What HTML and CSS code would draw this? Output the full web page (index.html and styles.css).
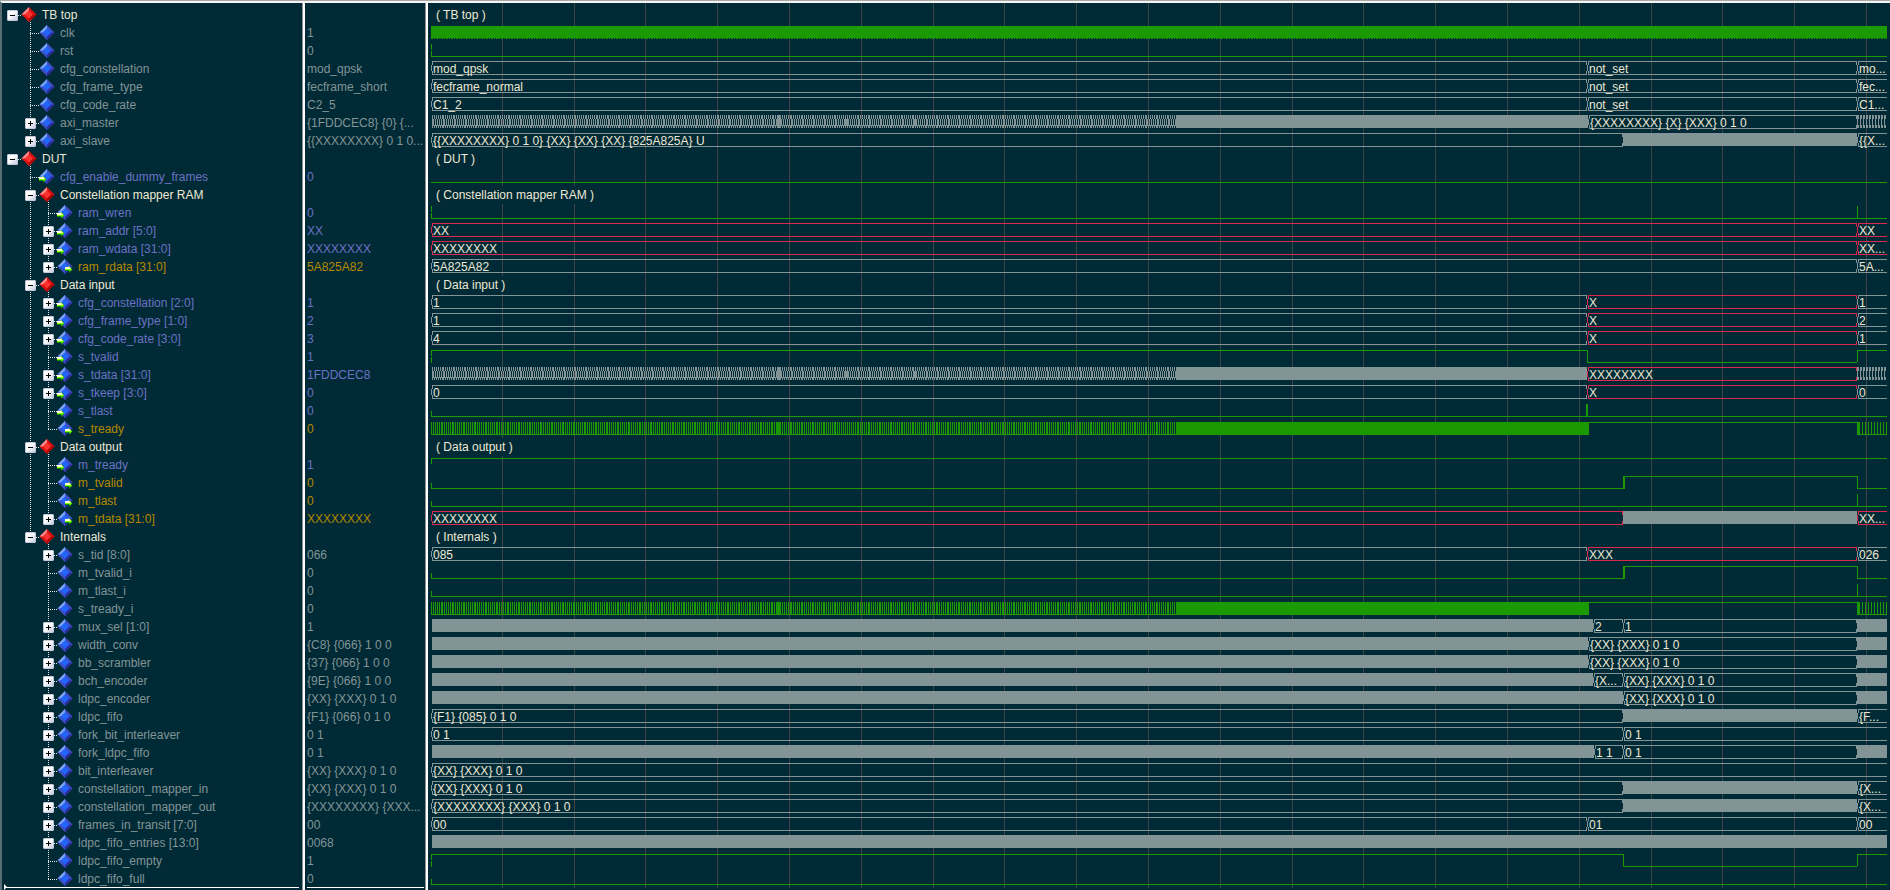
FILE: index.html
```html
<!DOCTYPE html>
<html lang="en">
<head>
<meta charset="utf-8">
<title>Waveform viewer</title>
<link rel="stylesheet" href="styles.css">
</head>
<body>
<svg class="defs" aria-hidden="true">
  <symbol id="red" viewBox="0 0 18 18">
    <path d="M8 1 L15.500 8.500 L8 16 L0.500 8.500Z" fill="#d91010"/>
    <path d="M8 1 V4.500 L4 8.500 H0.500Z" fill="#ff8c8c"/>
    <path d="M8 16 L15.500 8.500 H12 L8 12.500Z" fill="#a80404"/>
    <path d="M8 4.500 L12 8.500 L8 12.500 L4 8.500Z" fill="#ff3030"/>
  </symbol>
  <symbol id="blue" viewBox="0 0 18 18">
    <path d="M8 1 L15.500 8.500 L8 16 L0.500 8.500Z" fill="#3d50c8"/>
    <path d="M8 1 V4.500 L4 8.500 H0.500Z" fill="#7aa4f4"/>
    <path d="M8 16 L15.500 8.500 H12 L8 12.500Z" fill="#2c2ca0"/>
    <path d="M8 4.500 L12 8.500 L8 12.500 L4 8.500Z" fill="#2166fa"/>
  </symbol>
  <symbol id="arrow" viewBox="0 0 8 8">
    <path d="M0 3 H4 V1 L7.500 4.500 L4 8 V6 H0Z" fill="#0c8a00"/>
    <path d="M0 3 H4 V1 L7 4.500 L4.500 6.500 V5 H0Z" fill="#7dff00"/>
    <path d="M0 2 H3.500 V1 L6 4 H0Z" fill="#ffffd8"/>
  </symbol>
</svg>
<main class="viewer">
  <section class="pane names" aria-label="Signals">
    <ul class="rows" id="names"></ul>
    <div class="scroll"><span class="thumb"></span></div>
  </section>
  <section class="pane values" aria-label="Values">
    <ul class="rows" id="values"></ul>
    <div class="scroll"><span class="thumb"></span></div>
  </section>
  <section class="pane waves" aria-label="Waves">
    <div class="plot">
      <div class="grid" id="grid"></div>
      <ul class="rows" id="waves"></ul>
    </div>
  </section>
</main>
<script src="waves.js"></script>
</body>
</html>
```
FILE: styles.css
```css
* { box-sizing: border-box; }

body {
  margin: 0;
  background: #002b36;
  color: #839496;
  font: 12px/18px "Liberation Sans", Arial, sans-serif;
  overflow: hidden;
}

.defs { display: none; }

.viewer {
  display: grid;
  grid-template-columns: 305px 123px minmax(0, 1fr);
  min-height: 100vh;
  border-top: 1px solid #a8a8a8;
}

.pane {
  border-top: 2px solid #f4f4f4;
  padding-top: 3px;
  min-width: 0;
}

.names {
  border-left: 2px solid #586e75;
  box-shadow: inset -2px 0 #ffffff, inset -3px 0 #909090;
}

.values { box-shadow: inset -2px 0 #ffffff, inset -3px 0 #909090; }

.rows { list-style: none; margin: 0; padding: 0; }

.row {
  display: flex;
  height: 18px;
  white-space: pre;
}

.names .row { padding-left: 1px; }
.values .row { padding-left: 2px; }

.group { color: #eee8d5; }
.plain { color: #839496; }
.in { color: #6c71c4; }
.out { color: #b58900; }

.cell {
  display: grid;
  place-items: center;
  flex: none;
  width: 18px;
  height: 18px;
  background-repeat: no-repeat;
}

/* dotted tree guides: vertical run, horizontal run */
.cell { --v: repeating-linear-gradient(180deg, #e4e4e4 0 1px, transparent 1px 2px);
        --h: repeating-linear-gradient(90deg, #e4e4e4 0 1px, transparent 1px 2px); }
.through { background-image: var(--v); background-position: 9px 0; background-size: 1px 18px; }
.tee { background-image: var(--v), var(--h); background-position: 9px 0, 9px 9px; background-size: 1px 18px, 9px 1px; }
.corner { background-image: var(--v), var(--h); background-position: 9px 0, 9px 9px; background-size: 1px 10px, 9px 1px; }
.root { background-image: var(--h); background-position: 9px 9px; background-size: 9px 1px; }
.stem { background-image: var(--v); background-position: 9px 14px; background-size: 1px 4px; }

.toggle {
  width: 11px;
  height: 11px;
  margin: 1px 0 0 1px;
  padding: 0;
  border: 1px solid #c4cad8;
  border-radius: 1px;
  background:
    linear-gradient(#000000, #000000) center / 5px 1px no-repeat,
    linear-gradient(135deg, #ffffff 40%, #c3cbe0);
}

.toggle[aria-expanded="false"] {
  background:
    linear-gradient(#000000, #000000) center / 5px 1px no-repeat,
    linear-gradient(#000000, #000000) center / 1px 5px no-repeat,
    linear-gradient(135deg, #ffffff 40%, #c3cbe0);
}

.icon { display: block; width: 18px; height: 18px; }

.name { padding-left: 3px; }

.scroll {
  position: relative;
  height: 2px;
  margin-top: -1px;
  padding: 0 6px 0 3px;
}
.values .scroll { padding: 0 4px 0 2px; }
.thumb { display: block; height: 1px; background: #ffffff; }

/* insertion marker at the end of the signal list */
.names .scroll::before {
  content: "";
  position: absolute;
  left: 2px;
  bottom: -1px;
  width: 3px;
  height: 6px;
  background: #ffffff;
  clip-path: polygon(0 0, 100% 50%, 0 100%);
}

.plot {
  position: relative;
  margin: -3px 3px 0;
  padding-top: 3px;
  min-height: 100%;
}

.grid {
  position: absolute;
  inset: 0;
  display: flex;
  overflow: hidden;
}

.tick { flex: none; border-right: 1px solid #404444; }

.waves .rows { position: relative; }

.caption {
  padding: 0 4px 0 5px;
  background: #002b36;
  color: #eee8d5;
}

.seg {
  flex: none;
  height: 18px;
  background-repeat: no-repeat;
  --ink: linear-gradient(currentColor, currentColor);
}

.green { color: #1a9900; }
.gray { color: #839496; }
.unknown { color: #dc284e; }

.label { color: #eee8d5; padding-left: 2px; }

.bus {
  background-image: var(--ink), var(--ink), var(--ink), var(--ink), var(--ink), var(--ink), var(--ink);
  background-position: 0 5px, 1px 1px, 1px 14px, 1px 1px, 1px 11px, 100% 1px, 100% 11px;
  background-size: 1px 6px, 100% 1px, 100% 1px, 1px 4px, 1px 4px, 1px 4px, 1px 4px;
}

.bus.open {
  background-size: 1px 6px, 100% 1px, 100% 1px, 1px 4px, 1px 4px, 0 0, 0 0;
}

.dense { background-image: var(--ink); background-position: 0 1px; background-size: 100% 13px; }

.solid { background-image: var(--ink); background-position: 0 2px; background-size: 100% 13px; }

.clock {
  --dash: repeating-linear-gradient(90deg, currentColor 0 2px, transparent 2px 3px, currentColor 3px 4px, transparent 4px 5px);
  background-image: var(--ink), var(--dash);
  background-position: 0 2px, 0 14px;
  background-size: 100% 12px, 100% 1px;
}

.hatch {
  --s: repeating-linear-gradient(90deg, currentColor 0 1px, transparent 1px 2px, currentColor 2px 3px, transparent 3px 4px, currentColor 4px 5px, transparent 5px 6px, currentColor 6px 7px, transparent 7px 8px, currentColor 8px 9px, transparent 9px 10px, currentColor 10px 11px);
  --m: repeating-linear-gradient(90deg, currentColor 0 2px, transparent 2px 3px, currentColor 3px 4px, transparent 4px 5px, currentColor 5px 6px, transparent 6px 7px, currentColor 7px 8px, transparent 8px 9px, currentColor 9px 10px, transparent 10px 11px);
}

.sparse {
  --s: repeating-linear-gradient(90deg, currentColor 0 2px, transparent 2px 3px);
  --m: repeating-linear-gradient(90deg, currentColor 0 1px, transparent 1px 3px);
}

.sparse.gray {
  background-image: var(--s), var(--m), var(--s);
  background-position: 0 1px, 0 5px, 0 11px;
  background-size: 100% 4px, 100% 6px, 100% 3px;
}

.hatch.gray {
  background-image: var(--s), var(--m), var(--ink), var(--s);
  background-position: 0 1px, 0 5px, 0 11px, 0 12px;
  background-size: 100% 4px, 100% 6px, 100% 1px, 100% 2px;
}

.hatch.green, .sparse.green {
  background-image: var(--s), var(--ink);
  background-position: 0 2px, 0 14px;
  background-size: 100% 12px, 100% 1px;
}

.sparse.green { background-image: var(--m), var(--ink); }

.low { --y: 14px; }
.high { --y: 2px; }

.low, .high {
  background-image: var(--ink), var(--ink), var(--ink);
  background-position: 0 var(--y), 0 2px, 0 9px;
  background-size: 100% 1px, 0 0, 0 0;
}

.edge1 { background-size: 100% 1px, 1px 12px, 1px 5px; }
.edge2 { background-size: 100% 1px, 2px 12px, 2px 6px; }
.split { background-size: 100% 1px, 1px 6px, 1px 6px; }
.low.half { background-size: 100% 1px, 0 0, 1px 6px; }
.high.half { background-size: 100% 1px, 1px 6px, 0 0; }
```
FILE: waves.js
```js
// Time axis: the plot shows SPAN units; the main events fall at these times.
const SPAN = 1456;
const GRID_STEP = 71.8;
const END = SPAN;
const IDLE = 1156;
const OUT = 1192;
const NEXT = 1426;

// A segment is [css classes, end time, label].
const bus = (end, label) => ['bus gray', end, label];
const bad = (end, label) => ['bus unknown', end, label];
const gap = ['', 1];
const dense = end => ['dense gray', end];
const lo = (end, extra = '') => ['low green ' + extra, end];
const hi = (end, extra = '') => ['high green ' + extra, end];

const three = (a, b, c) => [bus(IDLE, a), bus(NEXT, b), bus(END, c)];
const config = (a, c) => [bus(IDLE, a), bad(NEXT, 'X'), bus(END, c)];
const burst = color => [
  ['hatch ' + color, 346], [(color === 'gray' ? 'dense ' : 'solid ') + color, 349],
  ['hatch ' + color, 414], [(color === 'gray' ? '' : 'solid ') + 'hatch ' + color, 416],
  ['hatch ' + color, 482], [(color === 'gray' ? '' : 'solid ') + 'hatch ' + color, 484],
  ['hatch ' + color, 745]
];
const ready = [...burst('green'), ['solid green', 1158], hi(NEXT), ['solid green', NEXT + 2], ['sparse green', END]];
const valid = [lo(OUT, 'half'), hi(NEXT, 'edge2'), lo(END, 'edge1')];
const last = [lo(NEXT, 'half'), lo(END, 'edge1')];

// Row: [depth, kind, name, value, segments]; a name starting with "+" is collapsed.
const rows = [
  [0, 'group', 'TB top'],
  [1, 'plain', 'clk', '1', [['clock green', END]]],
  [1, 'plain', 'rst', '0', [lo(END, 'split')]],
  [1, 'plain', 'cfg_constellation', 'mod_qpsk', three('mod_qpsk', 'not_set', 'mo...')],
  [1, 'plain', 'cfg_frame_type', 'fecframe_short', three('fecframe_normal', 'not_set', 'fec...')],
  [1, 'plain', 'cfg_code_rate', 'C2_5', three('C1_2', 'not_set', 'C1...')],
  [1, 'plain', '+axi_master', '{1FDDCEC8} {0} {...', [gap, ...burst('gray'), dense(1157), bus(NEXT, '{XXXXXXXX} {X} {XXX} 0 1 0'), ['sparse gray', END]]],
  [1, 'plain', '+axi_slave', '{{XXXXXXXX} 0 1 0...', [bus(OUT, '{{XXXXXXXX} 0 1 0} {XX} {XX} {XX} {825A825A} U'), dense(NEXT), bus(END, '{{X...')]],
  [0, 'group', 'DUT'],
  [1, 'in', 'cfg_enable_dummy_frames', '0', [lo(END)]],
  [1, 'group', 'Constellation mapper RAM'],
  [2, 'in', 'ram_wren', '0', [lo(NEXT, 'split'), lo(END, 'edge1')]],
  [2, 'in', '+ram_addr [5:0]', 'XX', [bad(NEXT, 'XX'), bad(END, 'XX')]],
  [2, 'in', '+ram_wdata [31:0]', 'XXXXXXXX', [bad(NEXT, 'XXXXXXXX'), bad(END, 'XX...')]],
  [2, 'out', '+ram_rdata [31:0]', '5A825A82', [bus(NEXT, '5A825A82'), bus(END, '5A...')]],
  [1, 'group', 'Data input'],
  [2, 'in', '+cfg_constellation [2:0]', '1', config('1', '1')],
  [2, 'in', '+cfg_frame_type [1:0]', '2', config('1', '2')],
  [2, 'in', '+cfg_code_rate [3:0]', '3', config('4', '1')],
  [2, 'in', 's_tvalid', '1', [hi(IDLE, 'split'), lo(NEXT, 'edge1'), hi(END, 'edge1')]],
  [2, 'in', '+s_tdata [31:0]', '1FDDCEC8', [gap, ...burst('gray'), dense(IDLE), bad(NEXT, 'XXXXXXXX'), ['sparse gray', END]]],
  [2, 'in', '+s_tkeep [3:0]', '0', config('0', '0')],
  [2, 'in', 's_tlast', '0', [lo(IDLE - 1, 'half'), lo(END, 'edge2')]],
  [2, 'out', 's_tready', '0', ready],
  [1, 'group', 'Data output'],
  [2, 'in', 'm_tready', '1', [hi(END, 'half')]],
  [2, 'out', 'm_tvalid', '0', valid],
  [2, 'out', 'm_tlast', '0', last],
  [2, 'out', '+m_tdata [31:0]', 'XXXXXXXX', [bad(OUT, 'XXXXXXXX'), dense(NEXT), bad(END, 'XX...')]],
  [1, 'group', 'Internals'],
  [2, 'plain', '+s_tid [8:0]', '066', [bus(IDLE, '085'), bad(NEXT, 'XXX'), bus(END, '026')]],
  [2, 'plain', 'm_tvalid_i', '0', valid],
  [2, 'plain', 'm_tlast_i', '0', last],
  [2, 'plain', 's_tready_i', '0', ready],
  [2, 'plain', '+mux_sel [1:0]', '1', [gap, dense(1162), bus(OUT, '2'), bus(NEXT, '1'), dense(END)]],
  [2, 'plain', '+width_conv', '{C8} {066} 1 0 0', [gap, dense(1157), bus(NEXT, '{XX} {XXX} 0 1 0'), dense(END)]],
  [2, 'plain', '+bb_scrambler', '{37} {066} 1 0 0', [gap, dense(1157), bus(NEXT, '{XX} {XXX} 0 1 0'), dense(END)]],
  [2, 'plain', '+bch_encoder', '{9E} {066} 1 0 0', [gap, dense(1162), bus(OUT, '{X...'), bus(NEXT, '{XX} {XXX} 0 1 0'), dense(END)]],
  [2, 'plain', '+ldpc_encoder', '{XX} {XXX} 0 1 0', [gap, dense(OUT), bus(NEXT, '{XX} {XXX} 0 1 0'), dense(END)]],
  [2, 'plain', '+ldpc_fifo', '{F1} {066} 0 1 0', [bus(OUT, '{F1} {085} 0 1 0'), dense(NEXT), bus(END, '{F...')]],
  [2, 'plain', '+fork_bit_interleaver', '0 1', [bus(OUT, '0 1'), bus(END, '0 1')]],
  [2, 'plain', '+fork_ldpc_fifo', '0 1', [gap, dense(1163), bus(OUT, '1 1'), bus(NEXT, '0 1'), dense(END)]],
  [2, 'plain', '+bit_interleaver', '{XX} {XXX} 0 1 0', [bus(END, '{XX} {XXX} 0 1 0')]],
  [2, 'plain', '+constellation_mapper_in', '{XX} {XXX} 0 1 0', [bus(OUT, '{XX} {XXX} 0 1 0'), dense(NEXT), bus(END, '{X...')]],
  [2, 'plain', '+constellation_mapper_out', '{XXXXXXXX} {XXX...', [bus(OUT, '{XXXXXXXX} {XXX} 0 1 0'), dense(NEXT), bus(END, '{X...')]],
  [2, 'plain', '+frames_in_transit [7:0]', '00', three('00', '01', '00')],
  [2, 'plain', '+ldpc_fifo_entries [13:0]', '0068', [gap, dense(END)]],
  [2, 'plain', 'ldpc_fifo_empty', '1', [hi(OUT, 'split'), lo(NEXT, 'edge1'), hi(END, 'edge1')]],
  [2, 'plain', 'ldpc_fifo_full', '0', [lo(END, 'half')]]
];

// True when another row follows at this depth before its parent ends.
function continues(index, depth) {
  for (let i = index + 1; i < rows.length; i++) {
    if (rows[i][0] < depth) return false;
    if (rows[i][0] === depth) return true;
  }
  return false;
}

function icon(kind) {
  const arrow = kind === 'in' ? '<use href="#arrow" x="0" y="7" width="8" height="8"/>'
    : kind === 'out' ? '<use href="#arrow" x="8" y="7" width="8" height="8"/>' : '';
  const gem = kind === 'group' ? 'red' : 'blue';
  return `<svg class="icon" viewBox="0 0 18 18" aria-hidden="true"><use href="#${gem}" width="18" height="18"/>${arrow}</svg>`;
}

function nameRow([depth, kind, raw], index) {
  const closed = raw[0] === '+';
  const name = closed ? raw.slice(1) : raw;
  let html = '';
  for (let d = 0; d < depth; d++) {
    html += `<span class="cell ${d && continues(index, d) ? 'through' : ''}"></span>`;
  }
  const guide = depth === 0 ? 'root' : continues(index, depth) ? 'tee' : 'corner';
  const button = closed || kind === 'group'
    ? `<button class="toggle" type="button" aria-expanded="${!closed}" aria-label="${name}"></button>` : '';
  html += `<span class="cell ${guide}">${button}</span>`;
  html += `<span class="cell ${kind === 'group' ? 'stem' : ''}">${icon(kind)}</span>`;
  return `<li class="row ${kind}">${html}<span class="name">${name}</span></li>`;
}

function waveRow([, kind, name, , segments]) {
  if (kind === 'group') return `<li class="row"><span class="caption">( ${name} )</span></li>`;
  let start = 0;
  const html = segments.map(([css, end, label]) => {
    const width = (end - start) / SPAN * 100;
    start = end;
    const open = end === END ? 'open' : '';
    const text = label ? `<span class="label">${label}</span>` : '';
    return `<span class="seg ${css} ${open}" style="width:${width}%">${text}</span>`;
  }).join('');
  return `<li class="row">${html}</li>`;
}

document.getElementById('names').innerHTML = rows.map(nameRow).join('');
document.getElementById('values').innerHTML = rows.map(r => `<li class="row ${r[1]}">${r[3] || ''}</li>`).join('');
document.getElementById('waves').innerHTML = rows.map(waveRow).join('');
document.getElementById('grid').innerHTML =
  `<span class="tick" style="width:${GRID_STEP / SPAN * 100}%"></span>`.repeat(Math.floor(SPAN / GRID_STEP));
```
